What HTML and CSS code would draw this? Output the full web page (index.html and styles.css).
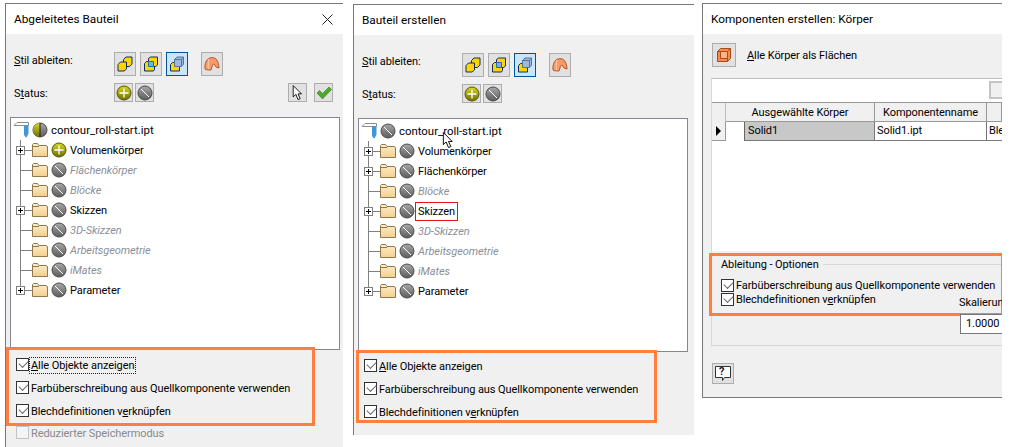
FILE: index.html
```html
<!DOCTYPE html>
<html lang="de">
<head>
<meta charset="utf-8">
<title>Abgeleitetes Bauteil</title>
<link rel="stylesheet" href="styles.css">
</head>
<body>
<svg class="defs" width="0" height="0" aria-hidden="true">
  <defs>
    <linearGradient id="gy" x1="0" y1="0" x2="0" y2="1"><stop offset="0" stop-color="#a8a8a8"/><stop offset="1" stop-color="#5c5c5c"/></linearGradient>
    <linearGradient id="yl" x1="0" y1="0" x2="0" y2="1"><stop offset="0" stop-color="#d8d820"/><stop offset="1" stop-color="#6f6f00"/></linearGradient>
    <linearGradient id="fd" x1="0" y1="0" x2="0" y2="1"><stop offset="0" stop-color="#fdeecb"/><stop offset="1" stop-color="#f4cf8e"/></linearGradient>
    <symbol id="folder" viewBox="0 0 16 16"><path d="M.5 14.500V2.500l1-1h4l1.500 2h7l1.500 1v10z" fill="url(#fd)" stroke="#8f7750"/><path d="M1 4.500h6" stroke="#8f7750" fill="none"/></symbol>
    <symbol id="off" viewBox="0 0 16 16"><circle cx="8" cy="8" r="7" fill="url(#gy)" stroke="#4c4c4c"/><path d="M4 4l8 8" stroke="#fff"/></symbol>
    <symbol id="add" viewBox="0 0 16 16"><circle cx="8" cy="8" r="7" fill="url(#yl)" stroke="#55550a"/><path d="M3.500 8h9M8 3.500v9" stroke="#fff" stroke-width="1.300"/></symbol>
    <symbol id="half" viewBox="0 0 16 16"><circle cx="8" cy="8" r="7" fill="url(#gy)" stroke="#4c4c4c"/><path d="M8 1a7 7 0 0 0 0 14z" fill="url(#yl)"/><path d="M8 1v14" stroke="#222"/></symbol>
    <symbol id="part" viewBox="0 0 16 16"><path d="M1 3.500L4 .5h11.500v3z" fill="#fff" stroke="#8d8d8d"/><path d="M11 3.500h4.500v8l-2 4c-1.500-.5-2.500-2-2.500-4z" fill="#3f97d8"/></symbol>
    <symbol id="c1" viewBox="0 0 16 16"><path d="M6.500 3.500l2.500-2.500h6v7l-2.500 2.500h-6z" fill="#ffd500" stroke="#0d2c66"/><path d="M1 8.500l2.500-2.500h6v7l-2.500 2h-6z" fill="#ffd500" stroke="#0d2c66"/></symbol>
    <symbol id="c2" viewBox="0 0 16 16"><path d="M1.500 7.500l2-2h8v8l-1 1.500h-9z" fill="#ffd500" stroke="#0d2c66"/><path d="M5.500 5V2.500l2-1.500h7v8l-2 1.500h-2" fill="#ffd500" stroke="#0d2c66"/><path d="M5.500 5.500h5v5h-5z" fill="#69b6e6" stroke="#1b6fb8"/></symbol>
    <symbol id="c3" viewBox="0 0 16 16"><path d="M1.500 8.500l2-2h7v8.500h-9z" fill="#ffd500" stroke="#0d2c66"/><path d="M5.500 10.500V3.500l2.500-2.500h6.500v7.500l-2.500 2z" fill="#9db8dc" stroke="#55749b"/><path d="M5.500 3.500h7v7M12.500 3.500l2-2.500" stroke="#55749b" fill="none"/></symbol>
    <symbol id="shell" viewBox="0 0 16 16"><path d="M1 13c-.5-4 .5-8 3-10 2-1.500 6-2 8 0 2 2 3 6 3 9l-3-1-2-3c-1 0-2 1.500-2 3l-1 3c-2 0-5 0-6-1z" fill="#f79a68" stroke="#b65a2c"/><path d="M5 3c-1 3-1 7-.5 10" stroke="#ffd0b0" fill="none"/></symbol>
    <symbol id="pick" viewBox="0 0 16 18"><path d="M2.500 .5v13l3-3 2.500 6 2.500-1-2.500-5.500h4z" fill="#fff" stroke="#000"/></symbol>
    <symbol id="ok" viewBox="0 0 16 14"><path d="M1 7l2.500-2.500L6.500 7.500 13 1l2.500 2.500L6.500 13z" fill="#4ea82a" stroke="#2f7f15" stroke-width=".6"/></symbol>
    <symbol id="box" viewBox="0 0 16 16"><path d="M1.500 4.500l3-3h10v10l-3 3h-10z" fill="#f58b4f" stroke="#a84a1a"/><path d="M4.500 4.500h7v7h-7z" fill="#f9b48a" stroke="#a84a1a"/><path d="M1.500 4.500h3M11.500 4.500l3-3M11.500 11.500v3" stroke="#a84a1a"/></symbol>
    <symbol id="help" viewBox="0 0 16 16"><path d="M.5 .5h15v11h-6l-2 3v-3h-7z" fill="#fff" stroke="#333"/></symbol>
  </defs>
</svg>

<section class="window win-a">
  <header class="titlebar">
    <span class="title">Abgeleitetes Bauteil</span>
    <svg class="close" viewBox="0 0 11 11"><path d="M.5 .5l10 10M10.500 .5l-10 10" stroke="#222" fill="none"/></svg>
  </header>
  <div class="body">
    <div class="style-row">
      <span class="label"><u>S</u>til ableiten:</span>
      <div class="btns">
        <button class="tool"><svg class="ti"><use href="#c1"/></svg></button>
        <button class="tool"><svg class="ti"><use href="#c2"/></svg></button>
        <button class="tool on"><svg class="ti"><use href="#c3"/></svg></button>
        <button class="tool sep"><svg class="ti"><use href="#shell"/></svg></button>
      </div>
    </div>
    <div class="status-row">
      <span class="label">S<u>t</u>atus:</span>
      <div class="btns tight">
        <button class="mini"><svg class="si"><use href="#add"/></svg></button>
        <button class="mini"><svg class="si"><use href="#off"/></svg></button>
      </div>
      <div class="btns end">
        <button class="mini"><svg class="pi"><use href="#pick"/></svg></button>
        <button class="mini"><svg class="ki"><use href="#ok"/></svg></button>
      </div>
    </div>
    <div class="tree tree-a">
      <div class="root"><svg class="ic"><use href="#part"/></svg><svg class="ic"><use href="#half"/></svg><span class="rname">contour_roll-start.ipt</span></div>
      <div class="row"><span class="twig"><i class="exp"></i></span><svg class="ic"><use href="#folder"/></svg><svg class="ic"><use href="#add"/></svg><span class="name">Volumenkörper</span></div>
      <div class="row"><span class="twig"></span><svg class="ic"><use href="#folder"/></svg><svg class="ic"><use href="#off"/></svg><span class="name dim">Flächenkörper</span></div>
      <div class="row"><span class="twig"></span><svg class="ic"><use href="#folder"/></svg><svg class="ic"><use href="#off"/></svg><span class="name dim">Blöcke</span></div>
      <div class="row"><span class="twig"><i class="exp"></i></span><svg class="ic"><use href="#folder"/></svg><svg class="ic"><use href="#off"/></svg><span class="name">Skizzen</span></div>
      <div class="row"><span class="twig"></span><svg class="ic"><use href="#folder"/></svg><svg class="ic"><use href="#off"/></svg><span class="name dim">3D-Skizzen</span></div>
      <div class="row"><span class="twig"></span><svg class="ic"><use href="#folder"/></svg><svg class="ic"><use href="#off"/></svg><span class="name dim">Arbeitsgeometrie</span></div>
      <div class="row"><span class="twig"></span><svg class="ic"><use href="#folder"/></svg><svg class="ic"><use href="#off"/></svg><span class="name dim">iMates</span></div>
      <div class="row last"><span class="twig"><i class="exp"></i></span><svg class="ic"><use href="#folder"/></svg><svg class="ic"><use href="#off"/></svg><span class="name">Parameter</span></div>
    </div>
    <div class="callout callout-a">
      <label class="check"><i class="cb"></i><span class="focus"><u>A</u>lle Objekte anzeigen</span></label>
      <label class="check"><i class="cb"></i><span>Farbüberschreibung aus Quellkomponente verwenden</span></label>
      <label class="check"><i class="cb"></i><span>Blechdefinitionen v<u>e</u>rknüpfen</span></label>
    </div>
    <label class="check off-check"><i class="cb blank"></i><span>Reduzierter Speichermodus</span></label>
  </div>
</section>

<section class="window win-b">
  <header class="titlebar">
    <span class="title">Bauteil erstellen</span>
  </header>
  <div class="body">
    <div class="style-row">
      <span class="label"><u>S</u>til ableiten:</span>
      <div class="btns">
        <button class="tool"><svg class="ti"><use href="#c1"/></svg></button>
        <button class="tool"><svg class="ti"><use href="#c2"/></svg></button>
        <button class="tool on"><svg class="ti"><use href="#c3"/></svg></button>
        <button class="tool sep"><svg class="ti"><use href="#shell"/></svg></button>
      </div>
    </div>
    <div class="status-row">
      <span class="label">S<u>t</u>atus:</span>
      <div class="btns tight">
        <button class="mini"><svg class="si"><use href="#add"/></svg></button>
        <button class="mini"><svg class="si"><use href="#off"/></svg></button>
      </div>
    </div>
    <div class="tree tree-b">
      <div class="root"><svg class="ic"><use href="#part"/></svg><svg class="ic"><use href="#off"/></svg><span class="rname">contour_roll-start.ipt</span></div>
      <div class="row"><span class="twig"><i class="exp"></i></span><svg class="ic"><use href="#folder"/></svg><svg class="ic"><use href="#off"/></svg><span class="name">Volumenkörper</span></div>
      <div class="row"><span class="twig"><i class="exp"></i></span><svg class="ic"><use href="#folder"/></svg><svg class="ic"><use href="#off"/></svg><span class="name">Flächenkörper</span></div>
      <div class="row"><span class="twig"></span><svg class="ic"><use href="#folder"/></svg><svg class="ic"><use href="#off"/></svg><span class="name dim">Blöcke</span></div>
      <div class="row"><span class="twig"><i class="exp"></i></span><svg class="ic"><use href="#folder"/></svg><svg class="ic"><use href="#off"/></svg><span class="name marked">Skizzen</span></div>
      <div class="row"><span class="twig"></span><svg class="ic"><use href="#folder"/></svg><svg class="ic"><use href="#off"/></svg><span class="name dim">3D-Skizzen</span></div>
      <div class="row"><span class="twig"></span><svg class="ic"><use href="#folder"/></svg><svg class="ic"><use href="#off"/></svg><span class="name dim">Arbeitsgeometrie</span></div>
      <div class="row"><span class="twig"></span><svg class="ic"><use href="#folder"/></svg><svg class="ic"><use href="#off"/></svg><span class="name dim">iMates</span></div>
      <div class="row last"><span class="twig"><i class="exp"></i></span><svg class="ic"><use href="#folder"/></svg><svg class="ic"><use href="#off"/></svg><span class="name">Parameter</span></div>
      <svg class="cursor" viewBox="0 0 16 18"><path d="M2.500 .5v13l3-3 2.500 6 2.500-1-2.500-5.500h4z" fill="#fff" stroke="#000"/></svg>
    </div>
    <div class="callout callout-b">
      <label class="check"><i class="cb"></i><span><u>A</u>lle Objekte anzeigen</span></label>
      <label class="check"><i class="cb"></i><span>Farbüberschreibung aus Quellkomponente verwenden</span></label>
      <label class="check"><i class="cb"></i><span>Blechdefinitionen v<u>e</u>rknüpfen</span></label>
    </div>
  </div>
</section>

<section class="window win-c">
  <header class="titlebar">
    <span class="title">Komponenten erstellen: Körper</span>
  </header>
  <div class="body">
    <div class="all-row">
      <button class="tool big"><svg class="ti"><use href="#box"/></svg></button>
      <span class="label"><u>A</u>lle Körper als Flächen</span>
    </div>
    <div class="panel">
      <div class="strip"><i class="strip-btn"></i></div>
      <div class="thead">
        <span class="corner"></span>
        <span class="th th1">Ausgewählte Körper</span>
        <span class="th th2">Komponentenname</span>
        <span class="th th3"></span>
      </div>
      <div class="tbody">
        <span class="rowhead"><i class="arrow"></i></span>
        <span class="gap"></span>
        <span class="td sel">Solid1</span>
        <span class="td td2">Solid1.ipt</span>
        <span class="td td3">Ble</span>
      </div>
    </div>
    <div class="group">
      <div class="callout callout-c">
        <div class="legend"><span>Ableitung - Optionen</span><i class="rule"></i></div>
        <label class="check"><i class="cb"></i><span>Farbüberschreibung aus Quellkomponente verwenden</span></label>
        <label class="check"><i class="cb"></i><span>Blechdefinitionen v<u>e</u>rknüpfen</span></label>
      </div>
      <div class="scale">
        <span class="scale-label">Skalierun</span>
        <span class="input">1.0000</span>
      </div>
    </div>
    <button class="helpbtn"><svg class="hi"><use href="#help"/></svg><b class="q">?</b></button>
  </div>
</section>
</body>
</html>
```
FILE: styles.css
```css
* { box-sizing: border-box; }
html, body { margin: 0; padding: 0; }
body {
  width: 1025px; height: 447px; background: #fff; overflow: hidden; position: relative;
  font-family: Roboto, "Noto Sans", sans-serif; font-size: 11px; letter-spacing: -.08px; color: #000;
}
.defs { position: absolute; }
u { text-underline-offset: 1px; }
button { padding: 0; font: inherit; }

.window { position: absolute; display: flex; flex-direction: column; overflow: hidden;
  border-top: 1px solid #777; border-left: 1px solid #777; }
.win-a { left: 5px; top: 3px; width: 338px; height: 444px; }
.win-b { left: 353px; top: 4px; width: 341px; height: 431px; }
.win-c { left: 702px; top: 3px; width: 300px; height: 395px; border-bottom: 1px solid #777; }

.titlebar { flex: none; height: 30px; display: flex; align-items: center; justify-content: space-between;
  padding: 0 10px 0 8px; background: #fff; }
.title { font-size: 11.8px; letter-spacing: 0; }
.close { width: 11px; height: 11px; }
.body { flex: 1; min-height: 0; background: #f0f0f0; display: flex; flex-direction: column; }

.style-row { display: flex; height: 24px; margin-top: 18px; padding-left: 8px; }
.status-row { display: flex; height: 19px; margin-top: 7px; padding-left: 8px; align-items: center; }
.label { flex: none; }
.style-row .label, .status-row .label { width: 100px; }
.style-row .label { line-height: 17px; }
.status-row .label { padding-top: 2px; }
.btns { display: flex; gap: 4px; }
.tight { gap: 2px; }
.end { margin-left: auto; gap: 7px; margin-right: 10px; }
.tool, .mini { display: flex; align-items: center; justify-content: center;
  border: 1px solid #adadad; background: #e1e1e1; }
.tool { width: 22px; height: 24px; }
.tool.on { background: #cce4f7; border-color: #005499; }
.tool.sep { margin-left: 9px; }
.mini { width: 19px; height: 19px; }
.ti { width: 16px; height: 16px; }
.si { width: 16px; height: 16px; }
.pi { width: 14px; height: 16px; }
.ki { width: 16px; height: 14px; }

.tree { flex: none; position: relative; background: #fff; border: 1px solid #828790;
  margin-top: 15px; padding-top: 2px; }
.tree-a { margin-left: 4px; width: 330px; height: 233px; }
.tree-b { margin-left: 4px; width: 330px; height: 234px; }
.root { display: flex; align-items: center; height: 20px; padding-left: 2px; font-size: 11.400px; letter-spacing: 0; }
.row { display: flex; align-items: center; height: 20px; padding-left: 5px; }
.twig { flex: none; width: 16px; height: 20px;
  background:
    linear-gradient(#808080, #808080) 4px 0 / 1px 100% no-repeat,
    linear-gradient(#808080, #808080) 4px 10px / 12px 1px no-repeat;
  display: flex; align-items: center; }
.row.last .twig {
  background:
    linear-gradient(#808080, #808080) 4px 0 / 1px 10px no-repeat,
    linear-gradient(#808080, #808080) 4px 10px / 12px 1px no-repeat; }
.exp { width: 9px; height: 9px; border: 1px solid #808080; background:
    linear-gradient(#000, #000) center / 5px 1px no-repeat,
    linear-gradient(#000, #000) center / 1px 5px no-repeat, #fff; margin-top: 1px; }
.ic { flex: none; width: 16px; height: 16px; margin-right: 3px; }
.name { white-space: nowrap; }
.dim { color: #8b8f98; font-style: italic; }
.marked { outline: 1px solid #e8141c; outline-offset: 2px; }
.cursor { position: absolute; left: 82px; top: 13px; width: 15px; height: 17px; }

.callout { flex: none; border: 3px solid #ff7f41; display: flex; flex-direction: column; position: relative; }
.callout-a { margin-top: -3px; width: 309px; height: 79px; padding: 3px 0 0 7px; }
.callout-b { margin: -2px 0 0 2px; width: 301px; height: 73px; padding: 1px 0 0 5px; }
.check { display: flex; align-items: center; height: 23px; gap: 2px; white-space: nowrap; flex: none; }
.check span { margin-top: 2px; }
.cb { flex: none; width: 13px; height: 13px; border: 1px solid #333; background: #fff; position: relative; }
.cb::after { content: ""; position: absolute; left: 2px; top: 1px; width: 8px; height: 5px;
  border-left: 1.500px solid #666; border-bottom: 1.500px solid #666; transform: rotate(-45deg) scale(.95); }
.cb.blank { border-color: #c4c4c4; background: #f4f4f4; }
.cb.blank::after { display: none; }
.focus { outline: 1px dotted #222; outline-offset: 1px; }
.off-check { margin: -5px 0 0 10px; color: #8a8a8a; }

.all-row { display: flex; align-items: center; height: 24px; margin: 9px 0 0 9px; gap: 11px; }
.all-row .label { padding-top: 1px; }
.tool.big { width: 24px; }
.panel { flex: none; margin: 11px 0 0 8px; height: 173px; background: #fff;
  border-top: 1px solid #bdbdbd; border-left: 1px solid #d8d8d8; }
.strip { height: 23px; display: flex; justify-content: flex-end; padding-top: 2px; }
.strip-btn { width: 13px; height: 18px; background: #f0f0f0; border: 2px solid #c4c4c4; border-right: 0; }
.thead { display: flex; height: 20px; border-top: 1px solid #999; }
.corner { flex: none; width: 14px; background: #f0f0f0; border-right: 1px solid #bbb; }
.th { flex: none; background: #f0f0f0; border-right: 1px solid #999; text-align: center; line-height: 19px; border-bottom: 1px solid #999; }
.th1 { width: 149px; }
.th2 { width: 112px; }
.th3 { flex: 1; }
.tbody { display: flex; height: 19px; line-height: 18px; }
.rowhead { flex: none; width: 14px; background: #f0f0f0; border-right: 1px solid #999; border-bottom: 1px solid #999;
  display: flex; align-items: center; justify-content: center; }
.arrow { width: 0; height: 0; border-left: 5px solid #000; border-top: 5px solid transparent; border-bottom: 5px solid transparent; }
.gap { flex: none; width: 19px; border-right: 1px solid #666; }
.td { flex: none; border-bottom: 1px solid #777; padding-left: 2px; white-space: nowrap; }
.sel { width: 130px; background: #c8c8c8; padding-left: 3px; border-right: 1px solid #777; }
.td2 { width: 112px; border-right: 1px solid #777; }
.td3 { flex: 1; }

.group { flex: none; margin: 0 0 0 8px; height: 95px; border-left: 1px solid #d8d8d8; border-bottom: 1px solid #d8d8d8; position: relative; display: flex; flex-direction: column; }
.callout-c { margin: 2px 0 0 -3px; width: 295px; height: 63px; padding: 0 0 0 9px; }
.legend { display: flex; align-items: center; height: 17px; gap: 4px; margin-bottom: 5px; }
.rule { flex: 1; height: 1px; background: #d8d8d8; }
.callout-c .check { height: 14px; }
.callout-c .check span { margin-top: 0; }
.scale { position: absolute; left: 247px; top: 44px; display: flex; flex-direction: column; z-index: 1; }
.scale-label { line-height: 16px; }
.input { width: 44px; height: 20px; background: #fff; border: 1px solid #777; padding-left: 5px; line-height: 18px; margin-top: 3px; margin-left: 1px; white-space: nowrap; }

.helpbtn { flex: none; position: relative; width: 22px; height: 21px; margin: 17px 0 0 9px; border: 1px solid #adadad; background: #e1e1e1;
  display: flex; align-items: center; justify-content: center; }
.hi { width: 16px; height: 16px; }
.q { position: absolute; left: 6px; top: 0; font-size: 11px; line-height: 15px; color: #222; }
```
